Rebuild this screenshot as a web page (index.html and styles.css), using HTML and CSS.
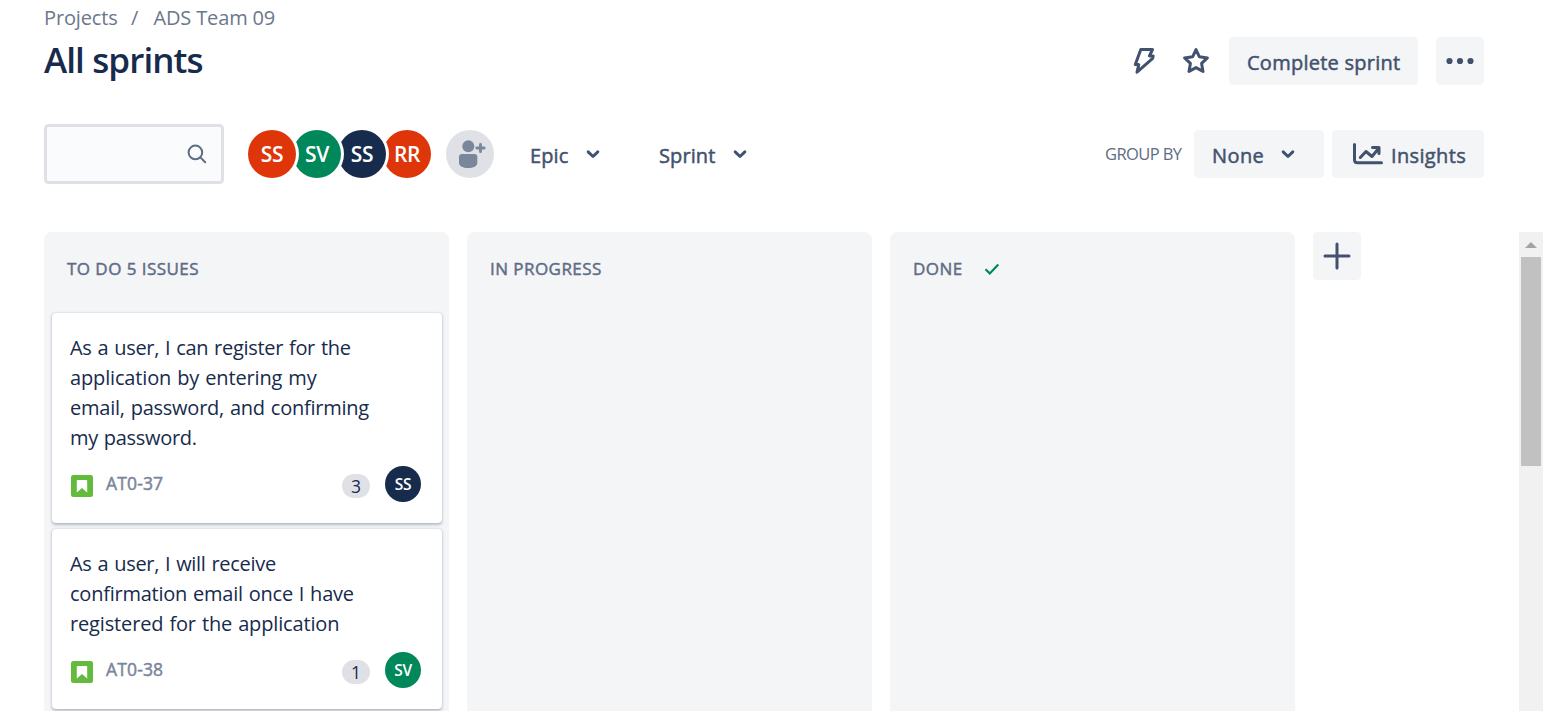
FILE: index.html
```html
<!DOCTYPE html>
<html lang="en">
<head>
<meta charset="utf-8">
<title>All sprints</title>
<link rel="stylesheet" href="styles.css">
</head>
<body>
<div class="page">
  <nav class="crumbs"><span class="crumb-projects">Projects</span><span class="crumb-sep">/</span><span class="crumb-team">ADS Team 09</span></nav>
  <header class="header">
    <h1 class="title">All sprints</h1>
    <div class="actions">
      <svg class="icon-bolt" width="24" height="28" viewBox="0 0 24 28"><path d="M8.800 2.500H20.500L17.400 9H21.200L20.700 11.300 5 25.200 6.800 17.600H3.300z" /></svg>
      <svg class="icon-star" width="28" height="28" viewBox="0 0 28 28"><path d="M14 2.6l3.4 7.2 8 1.1-5.8 5.5 1.4 8-7-3.8-7 3.800 1.400-8L2.600 10.900l8-1.100z"/></svg>
      <button class="btn btn-complete"><span>Complete sprint</span></button>
      <button class="btn btn-more"><svg width="28" height="8" viewBox="0 0 28 8"><circle cx="3.500" cy="4" r="3.100"/><circle cx="14" cy="4" r="3.100"/><circle cx="24.500" cy="4" r="3.100"/></svg></button>
    </div>
  </header>
  <div class="controls">
    <div class="search"><svg width="20" height="20" viewBox="0 0 20 20"><circle cx="8.400" cy="8.400" r="6.800"/><path d="M13.400 13.400L18.200 18.200"/></svg></div>
    <div class="people">
      <span class="avatar red a1">SS</span><span class="avatar green a2">SV</span><span class="avatar navy a3">SS</span><span class="avatar red a4">RR</span>
    </div>
    <div class="add-person"><svg width="48" height="48" viewBox="0 0 48 48"><circle cx="22.300" cy="16.300" r="6"/><path d="M13 27q0-3 3-3h12.300q3 0 3 3v6c0 3-4 5-9.100 5S13 36 13 33z"/><path class="plus" d="M34.500 14.300v7.400M30.800 18h7.400"/></svg></div>
    <div class="filter epic"><span>Epic</span><svg class="chev" width="14" height="10" viewBox="0 0 14 10"><path d="M2.200 2.900L7 7.500l4.800-4.600"/></svg></div>
    <div class="filter sprint"><span>Sprint</span><svg class="chev" width="14" height="10" viewBox="0 0 14 10"><path d="M2.200 2.900L7 7.500l4.800-4.600"/></svg></div>
    <span class="group-label">GROUP BY</span>
    <button class="btn btn-none"><span>None</span><svg class="chev" width="14" height="10" viewBox="0 0 14 10"><path d="M2.200 2.900L7 7.500l4.800-4.600"/></svg></button>
    <button class="btn btn-insights"><svg class="icon-chart" width="32" height="24" viewBox="0 0 32 24"><path d="M2.500 2.500v15.200q0 3 3 3h24"/><path d="M8.300 15.500l5.700-6 6 5 6.500-8M20.500 5.500h6.500v6"/></svg><span>Insights</span></button>
  </div>
  <main class="board">
    <section class="column">
      <h2 class="col-title t-todo">TO DO 5 ISSUES</h2>
      <div class="cards">
        <article class="card">
          <p class="summary"><span class="snug">As a user, I can register for the</span><span class="loose">application by entering my</span><span>email, password, and confirming</span><span class="snug">my password.</span></p>
          <div class="card-foot"><svg class="story" width="22" height="22" viewBox="0 0 22 22"><rect width="22" height="22" rx="2.500"/><path d="M6.600 5h8.800q.8 0 .8.800V17.500L11 12.900 5.800 17.500V5.800Q5.800 5 6.600 5z"/></svg><span class="key">AT0-37</span><span class="points">3</span><span class="avatar small navy">SS</span></div>
        </article>
        <article class="card">
          <p class="summary"><span class="snug">As a user, I will receive</span><span>confirmation email once I have</span><span class="loose">registered for the application</span></p>
          <div class="card-foot"><svg class="story" width="22" height="22" viewBox="0 0 22 22"><rect width="22" height="22" rx="2.500"/><path d="M6.600 5h8.800q.8 0 .8.800V17.500L11 12.900 5.800 17.500V5.800Q5.800 5 6.600 5z"/></svg><span class="key">AT0-38</span><span class="points">1</span><span class="avatar small green">SV</span></div>
        </article>
      </div>
    </section>
    <section class="column"><h2 class="col-title t-progress">IN PROGRESS</h2></section>
    <section class="column"><h2 class="col-title t-done"><span>DONE</span><svg width="16" height="14" viewBox="0 0 16 14"><path d="M1.500 7.200l4.300 4.300L14.300 2.500"/></svg></h2></section>
    <button class="btn btn-add"><svg width="28" height="28" viewBox="0 0 28 28"><path d="M14 2v24M2 14h24"/></svg></button>
    <div class="scrollbar"><svg width="12" height="6" viewBox="0 0 12 6"><path d="M0 6L6 0l6 6z"/></svg><div class="thumb"></div></div>
  </main>
</div>
</body>
</html>
```
FILE: styles.css
```css
* { box-sizing: border-box; }
body { margin: 0; background: #fff; font-family: "Open Sans", "Noto Sans", sans-serif; color: #172b4d; }
.page { height: 711px; overflow: hidden; display: flex; flex-direction: column; padding-left: 44px; }
svg { display: block; flex: none; }
span { white-space: nowrap; }

.crumbs { height: 37px; display: flex; font-size: 20px; line-height: 35px; color: #6b778c; letter-spacing: -0.15px; }
.crumb-projects { width: 87px; }
.crumb-sep { width: 22.500px; }

.header { height: 48px; display: flex; align-items: center; justify-content: space-between; padding-right: 59px; }
.title { margin: 0; font-size: 35px; line-height: 46px; padding-bottom: 2px; font-weight: 600; letter-spacing: -0.9px; }
.actions { display: flex; align-items: center; }
.icon-bolt, .icon-star { fill: none; stroke: #42526e; stroke-width: 3; stroke-linejoin: round; }
.icon-bolt { margin-right: 26px; }
.icon-star { margin-right: 19px; }

.btn { border: 0; margin: 0; padding: 0; height: 48px; border-radius: 4.500px; background: #f4f5f7; color: #42526e; font: 400 20px/48px "Open Sans", sans-serif; -webkit-text-stroke: 0.5px #42526e; display: flex; align-items: center; flex: none; }
.btn-complete { width: 189px; margin-right: 18px; padding: 3px 0 0 18px; letter-spacing: 0.25px; }
.btn-more { width: 48px; justify-content: center; fill: #42526e; }

.controls { height: 60px; margin-top: 39px; display: flex; align-items: center; padding-right: 59px; }
.search { width: 180px; height: 60px; border: 3px solid #dfe1e6; border-radius: 4.500px; background: #fafbfc; display: flex; align-items: center; justify-content: flex-end; padding-right: 14px; margin-right: 24px; }
.search svg { fill: none; stroke: #5e6c84; stroke-width: 2; stroke-linecap: round; }
.people { display: flex; margin-right: 15px; }
.avatar { width: 48px; height: 48px; border-radius: 50%; color: #fff; font-size: 21px; line-height: 48px; font-weight: 600; text-align: center; letter-spacing: -0.3px; position: relative; flex: none; }
.people .avatar { box-shadow: 0 0 0 3px #fff; }
.people .avatar + .avatar { margin-left: -3px; }
.a1 { z-index: 4; } .a2 { z-index: 3; } .a3 { z-index: 2; } .a4 { z-index: 1; }
.red { background: #de350b; }
.green { background: #00875a; }
.navy { background: #172b4d; }
.add-person { width: 48px; height: 48px; border-radius: 50%; background: #dfe1e6; fill: #7a869a; }
.plus { stroke: #7a869a; stroke-width: 2.800; stroke-linecap: round; }
.filter { display: flex; align-items: center; color: #42526e; font-size: 20px; line-height: 48px; letter-spacing: 0.1px; -webkit-text-stroke: 0.5px #42526e; }
.filter span { padding-top: 3px; }
.epic { margin-left: 36px; width: 129px; }
.epic span { width: 56px; }
.sprint span { width: 74px; }
.chev { fill: none; stroke: #42526e; stroke-width: 3; stroke-linecap: round; stroke-linejoin: round; }
.group-label { margin-left: auto; margin-right: 12px; width: 77px; padding-bottom: 2px; font-size: 16.500px; color: #5e6c84; letter-spacing: -0.6px; }
.btn-none { width: 130px; padding-left: 18px; margin-right: 8px; letter-spacing: 0.4px; }
.btn-none span { width: 69px; text-align: left; padding-top: 3px; }
.btn-insights { width: 152px; padding-left: 20px; letter-spacing: 0.35px; }
.btn-insights span { margin-left: 7px; padding-top: 3px; }
.icon-chart { fill: none; stroke: #42526e; stroke-width: 3; stroke-linecap: round; stroke-linejoin: round; }

.board { margin-top: 48px; flex: 1; min-height: 0; display: flex; align-items: flex-start; gap: 18px; }
.column { width: 405px; height: 479px; flex: none; overflow: hidden; background: #f4f5f7; border-radius: 7.500px 7.500px 0 0; padding: 0 7px 0 8px; }
.col-title { margin: 0; height: 81px; padding: 0 0 8px 15px; font-size: 17px; font-weight: 400; -webkit-text-stroke: 0.45px #5e6c84; line-height: 73px; color: #5e6c84; letter-spacing: 0.45px; display: flex; align-items: center; }
.t-done svg { margin-left: 21px; fill: none; stroke: #00875a; stroke-width: 2.200; }
.cards { display: flex; flex-direction: column; gap: 6px; }
.card { background: #fff; border-radius: 4px; box-shadow: 0 1.500px 3px rgba(9,30,66,.25), 0 0 1.500px rgba(9,30,66,.2); padding: 20px 21px 21px 18px; }
.summary { margin: 0 0 13px; font-size: 20px; line-height: 30px; letter-spacing: -0.24px; word-spacing: 1px; color: #172b4d; display: flex; flex-direction: column; }
.snug { letter-spacing: -0.3px; }
.loose { letter-spacing: -0.15px; }
.card-foot { height: 36px; display: flex; align-items: center; }
.story { margin: 3px 13px 0 1px; fill: #63ba3c; }
.story path { fill: #fff; }
.key { font-size: 17.500px; color: #7a869a; letter-spacing: 0.15px; padding-bottom: 2px; -webkit-text-stroke: 0.5px #7a869a; }
.points { margin: 4px 15px 0 auto; width: 28px; height: 24px; border-radius: 12px; background: #dfe1e6; font-size: 17.500px; line-height: 25px; text-align: center; }
.avatar.small { width: 36px; height: 36px; font-size: 15.500px; line-height: 36px; }

.btn-add { width: 48px; justify-content: center; }
.btn-add svg { stroke: #42526e; stroke-width: 3; stroke-linecap: round; }
.scrollbar { margin-left: auto; width: 24px; height: 479px; background: #f1f1f1; padding: 10px 2px 0; display: flex; flex-direction: column; align-items: center; gap: 9px; fill: #a3a3a3; }
.thumb { width: 20px; height: 209px; background: #c1c1c1; }
```
